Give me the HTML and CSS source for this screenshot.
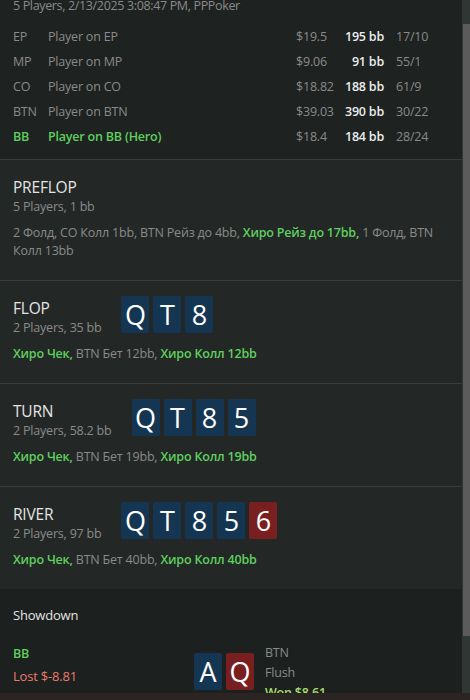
FILE: index.html
```html
<!DOCTYPE html>
<html lang="ru">
<head>
    <meta charset="utf-8">
    <title>Hand History</title>
    <link rel="stylesheet" href="styles.css">
</head>
<body>

    <div class="window">
        <div class="viewport">
            <div class="content">

                <section class="summary">
                    <div class="summary__meta">5 Players, 2/13/2025 3:08:47 PM, PPPoker</div>
                    <div class="players">
                        <div class="players__row">
                            <span class="players__pos">EP</span>
                            <span class="players__name">Player on EP</span>
                            <span class="players__stack">$19.5</span>
                            <span class="players__bb">195 bb</span>
                            <span class="players__stats">17/10</span>
                        </div>
                        <div class="players__row">
                            <span class="players__pos">MP</span>
                            <span class="players__name">Player on MP</span>
                            <span class="players__stack">$9.06</span>
                            <span class="players__bb">91 bb</span>
                            <span class="players__stats">55/1</span>
                        </div>
                        <div class="players__row">
                            <span class="players__pos">CO</span>
                            <span class="players__name">Player on CO</span>
                            <span class="players__stack">$18.82</span>
                            <span class="players__bb">188 bb</span>
                            <span class="players__stats">61/9</span>
                        </div>
                        <div class="players__row">
                            <span class="players__pos">BTN</span>
                            <span class="players__name">Player on BTN</span>
                            <span class="players__stack">$39.03</span>
                            <span class="players__bb">390 bb</span>
                            <span class="players__stats">30/22</span>
                        </div>
                        <div class="players__row players__row--hero">
                            <span class="players__pos">BB</span>
                            <span class="players__name">Player on BB (Hero)</span>
                            <span class="players__stack">$18.4</span>
                            <span class="players__bb">184 bb</span>
                            <span class="players__stats">28/24</span>
                        </div>
                    </div>
                </section>

                <section class="street">
                    <div class="street__head">
                        <div>
                            <div class="street__title">PREFLOP</div>
                            <div class="street__sub">5 Players, 1 bb</div>
                        </div>
                    </div>
                    <div class="street__actions">
                        2 Фолд, CO Колл 1bb, BTN Рейз до 4bb, <span class="hero">Хиро Рейз до 17bb,</span> 1 Фолд, BTN Колл 13bb
                    </div>
                </section>

                <section class="street">
                    <div class="street__head">
                        <div>
                            <div class="street__title">FLOP</div>
                            <div class="street__sub">2 Players, 35 bb</div>
                        </div>
                        <div class="cards">
                            <span class="card">Q</span>
                            <span class="card">T</span>
                            <span class="card">8</span>
                        </div>
                    </div>
                    <div class="street__actions">
                        <span class="hero">Хиро Чек,</span> BTN Бет 12bb, <span class="hero">Хиро Колл 12bb</span>
                    </div>
                </section>

                <section class="street">
                    <div class="street__head">
                        <div>
                            <div class="street__title">TURN</div>
                            <div class="street__sub">2 Players, 58.2 bb</div>
                        </div>
                        <div class="cards">
                            <span class="card">Q</span>
                            <span class="card">T</span>
                            <span class="card">8</span>
                            <span class="card">5</span>
                        </div>
                    </div>
                    <div class="street__actions">
                        <span class="hero">Хиро Чек,</span> BTN Бет 19bb, <span class="hero">Хиро Колл 19bb</span>
                    </div>
                </section>

                <section class="street">
                    <div class="street__head">
                        <div>
                            <div class="street__title">RIVER</div>
                            <div class="street__sub">2 Players, 97 bb</div>
                        </div>
                        <div class="cards">
                            <span class="card">Q</span>
                            <span class="card">T</span>
                            <span class="card">8</span>
                            <span class="card">5</span>
                            <span class="card card--red">6</span>
                        </div>
                    </div>
                    <div class="street__actions">
                        <span class="hero">Хиро Чек,</span> BTN Бет 40bb, <span class="hero">Хиро Колл 40bb</span>
                    </div>
                </section>

                <section class="showdown">
                    <div class="showdown__title">Showdown</div>
                    <div class="showdown__row">
                        <div class="showdown__player">
                            <div class="hero">BB</div>
                            <div class="showdown__lost">Lost $-8.81</div>
                        </div>
                        <div class="cards">
                            <span class="card">A</span>
                            <span class="card card--red">Q</span>
                        </div>
                        <div class="showdown__info">
                            <div>BTN</div>
                            <div>Flush</div>
                            <div class="showdown__won">Won $8.61</div>
                        </div>
                    </div>
                </section>

            </div>
            <div class="scrollbar">
                <div class="scrollbar__thumb"></div>
            </div>
        </div>
        <div class="statusbar"></div>
    </div>

</body>
</html>
```

FILE: styles.css
```css
* {
    box-sizing: border-box;
}

body {
    margin: 0;
    padding: 0;
    background-color: #1e2220;
    color: #8a8a8a;
    font-family: "Open Sans", "Noto Sans", sans-serif;
    font-size: 12.5px;
    letter-spacing: -0.2px;
    line-height: 1.5;
}

.window {
    width: 470px;
    height: 700px;
    display: flex;
    flex-direction: column;
}

.viewport {
    height: 693px;
    display: flex;
    overflow: hidden;
}

.content {
    flex: 1;
    min-width: 0;
}

/* summary */

.summary {
    background-color: #1e2220;
    padding: 0 13px 9px;
}

.summary__meta {
    margin-top: -4px;
    line-height: 20px;
    letter-spacing: -0.35px;
}

.players {
    margin-top: 9px;
}

.players__row {
    display: grid;
    grid-template-columns: 35px 1fr 40px 48px 65px;
    height: 25px;
    align-items: center;
}

.players__bb {
    color: #ececec;
    font-weight: 600;
    text-align: right;
    white-space: nowrap;
}

.players__stats {
    padding-left: 12px;
}

.players__row--hero .players__pos,
.players__row--hero .players__name {
    color: #5fcf5f;
    font-weight: 600;
}

/* streets */

.street {
    background-color: #232826;
    border-top: 1px solid #393e3b;
    padding: 17px 13px 20px;
}

.street__head {
    display: flex;
    align-items: flex-start;
    gap: 20px;
}

.street__title {
    color: #e4e4e4;
    font-size: 15.5px;
    line-height: 20px;
}

.street__sub {
    line-height: 20px;
}

.street__actions {
    margin-top: 7px;
    line-height: 18px;
}

.hero {
    color: #5fcf5f;
    font-weight: 600;
}

.cards {
    display: flex;
    gap: 4px;
    margin-top: -2px;
}

.card {
    width: 28px;
    height: 37px;
    border-radius: 2px;
    background-color: #153652;
    color: #fff;
    font-size: 27px;
    letter-spacing: 0;
    line-height: 37px;
    text-align: center;
}

.card--red {
    background-color: #7a1f1f;
}

/* showdown */

.showdown {
    background-color: #1c201e;
    padding: 16px 13px 0;
}

.showdown__title {
    color: #e4e4e4;
    font-size: 13px;
    line-height: 20px;
}

.showdown__row {
    display: flex;
    align-items: flex-start;
    margin-top: 17px;
}

.showdown__row .cards {
    margin-top: 11px;
}

.showdown__player {
    width: 181px;
    line-height: 23px;
}

.showdown__lost {
    color: #ea7b6c;
    font-size: 13px;
}

.showdown__info {
    margin: 1px 0 0 11px;
    line-height: 20px;
}

.showdown__won {
    color: #a9dc6a;
    font-weight: 600;
}

/* scrollbar */

.scrollbar {
    width: 8px;
    background-color: #2f3634;
}

.scrollbar__thumb {
    margin: 24px 0 0 1px;
    height: 612px;
    background-color: #5b5b5b;
}

.statusbar {
    height: 7px;
    background-color: #2a2523;
}
```
